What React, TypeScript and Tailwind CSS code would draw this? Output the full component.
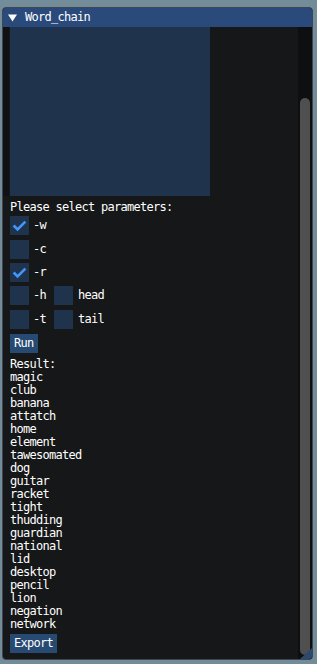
import React from "react";

const words = [
  "magic",
  "club",
  "banana",
  "attatch",
  "home",
  "element",
  "tawesomated",
  "dog",
  "guitar",
  "racket",
  "tight",
  "thudding",
  "guardian",
  "national",
  "lid",
  "desktop",
  "pencil",
  "lion",
  "negation",
  "network",
];

function Check({ checked }: { checked: boolean }) {
  return (
    <div className="w-[19px] h-[19px] bg-[#20334d] shrink-0">
      {checked && (
        <svg width="19" height="19" viewBox="0 0 19 19">
          <polyline
            points="3.65,9.5 7.55,13.4 15.35,5.6"
            fill="none"
            stroke="#4296fa"
            strokeWidth="2.6"
            strokeLinecap="butt"
            strokeLinejoin="miter"
          />
        </svg>
      )}
    </div>
  );
}

function Row({ label, checked, extra, className }: { label: string; checked: boolean; extra?: string; className: string }) {
  return (
    <div className={"flex items-center h-[19px] " + className}>
      <Check checked={checked} />
      <span className="ml-[4px] leading-[13px]">{label}</span>
      {extra && (
        <>
          <div className="ml-[8px]">
            <Check checked={false} />
          </div>
          <span className="ml-[5px] leading-[13px]">{extra}</span>
        </>
      )}
    </div>
  );
}

export default function App() {
  return (
    <div
      className="w-[317px] h-[664px] bg-[#738c99] pt-[7px] pl-[2px] overflow-hidden text-white text-[12px] tracking-[-0.72px]"
      style={{ fontFamily: '"DejaVu Sans Mono", "Liberation Mono", monospace' }}
    >
      <div className="w-[311px] h-[653px] flex flex-col rounded-[4px] border border-[#40454f] bg-[#151718] overflow-hidden relative">
        <div className="h-[19px] bg-[#294a7a] flex items-center pl-[5px] shrink-0">
          <svg width="9" height="8" viewBox="0 0 9 8" className="shrink-0">
            <polygon points="0,0.5 9,0.5 4.5,7.5" fill="#ffffff" />
          </svg>
          <span className="ml-[8px] leading-[13px]">Word_chain</span>
        </div>
        <div className="flex-1 flex min-h-0">
          <div className="flex-1 flex flex-col pl-[7px] overflow-hidden">
            <div className="flex h-[169px] shrink-0 ml-[-7px]">
              <div className="w-[6px] h-full bg-[#101112]" />
              <div className="ml-[1px] w-[200px] h-full bg-[#20334d]" />
            </div>
            <div className="mt-[5px] leading-[13px] h-[13px] whitespace-nowrap">Please select parameters:</div>
            <Row className="mt-[2px]" label="-w" checked={true} />
            <Row className="mt-[5px]" label="-c" checked={false} />
            <Row className="mt-[4px]" label="-r" checked={true} />
            <Row className="mt-[4px]" label="-h" checked={false} extra="head" />
            <Row className="mt-[5px]" label="-t" checked={false} extra="tail" />
            <div className="mt-[5px] flex">
              <div className="h-[19px] px-[4px] bg-[#274a72] flex items-center leading-[13px]">Run</div>
            </div>
            <div className="mt-[5px] flex flex-col leading-[13px]">
              <div className="h-[13px]">Result:</div>
              {words.map((w) => (
                <div key={w} className="h-[13px]">
                  {w}
                </div>
              ))}
            </div>
            <div className="mt-[3px] flex">
              <div className="h-[19px] px-[4px] bg-[#274a72] flex items-center leading-[13px]">Export</div>
            </div>
          </div>
          <div className="w-[14px] bg-[#0e0f10] shrink-0 pt-[71px] pb-[4px] px-[2px] flex">
            <div className="w-full flex-1 rounded-full bg-[#4f4f4f]" />
          </div>
        </div>
        <svg width="12" height="11" viewBox="0 0 12 11" className="absolute right-0 bottom-0">
          <polygon points="12,0 12,11 0,11" fill="#2c4a6e" />
        </svg>
      </div>
    </div>
  );
}
